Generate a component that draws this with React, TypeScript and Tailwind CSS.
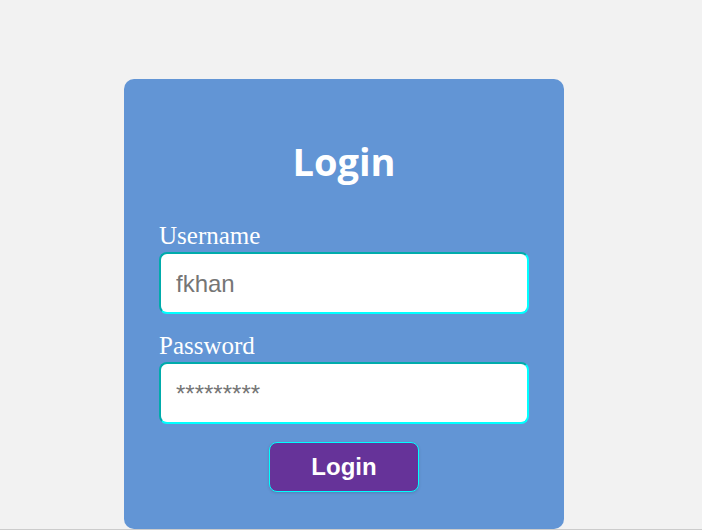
export default function App() {
  return (
    <div className="min-h-[530px] bg-[#f2f2f2] flex flex-col">
      <div className="pt-[79px] flex-1">
        <div className="ml-[124px] w-[440px] h-[450px] rounded-[10px] bg-[#6295d5] px-[35px] pt-[58px]">
          <h1 className="text-center text-white font-bold text-[38px] leading-[48px] font-['Comic_Sans_MS','Open_Sans',cursive]">
            Login
          </h1>
          <form className="mt-[36px] flex flex-col" onSubmit={(e) => e.preventDefault()}>
            <label className="pt-px text-white text-[25px] leading-[28px] font-['Liberation_Serif',serif]">
              Username
            </label>
            <input
              type="text"
              placeholder="fkhan"
              className="mt-[2px] h-[62px] w-full rounded-[8px] border-2 border-[#00ffff] [border-style:inset] bg-white px-[15px] pt-px text-[24px] text-[#333] placeholder:text-[#757575] outline-none font-['Liberation_Sans',Arial,sans-serif]"
            />
            <label className="mt-[17px] pt-px text-white text-[25px] leading-[28px] font-['Liberation_Serif',serif]">
              Password
            </label>
            <input
              type="text"
              placeholder="*********"
              className="mt-[2px] h-[62px] w-full rounded-[8px] border-2 border-[#00ffff] [border-style:inset] bg-white px-[15px] pt-px text-[24px] text-[#333] placeholder:text-[#757575] outline-none font-['Liberation_Sans',Arial,sans-serif]"
            />
            <button
              type="submit"
              className="mt-[18px] self-center w-[150px] h-[50px] rounded-[8px] border border-[#00ffff] bg-[#663399] text-white font-bold text-[24px] shadow-[0_1px_3px_rgba(0,0,0,0.15)] font-['Liberation_Sans',Arial,sans-serif]"
            >
              Login
            </button>
          </form>
        </div>
      </div>
      <div className="h-px bg-[#cccccc]" />
    </div>
  );
}
